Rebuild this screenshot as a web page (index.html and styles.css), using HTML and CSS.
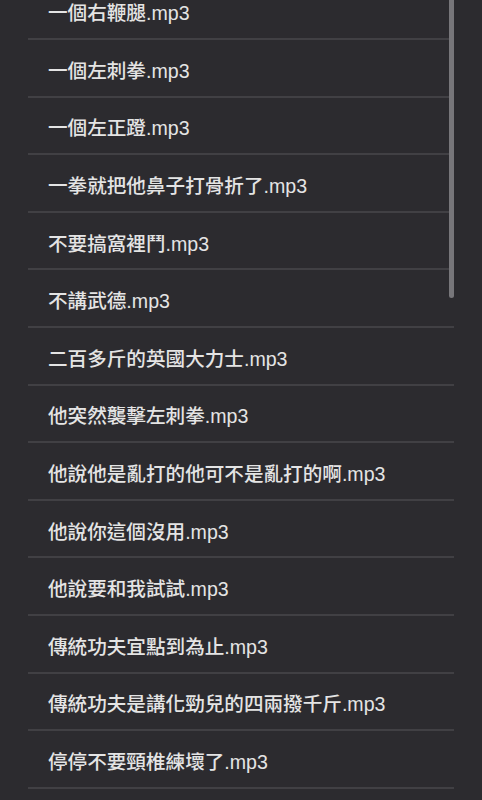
FILE: index.html
```html
<!DOCTYPE html>
<html lang="zh-Hant">
<head>
<meta charset="utf-8">
<link rel="stylesheet" href="styles.css">
</head>
<body>
<div class="viewport">
  <ul class="file-list">
    <li class="file-item">一個右鞭腿.mp3</li>
    <li class="file-item">一個左刺拳.mp3</li>
    <li class="file-item">一個左正蹬.mp3</li>
    <li class="file-item">一拳就把他鼻子打骨折了.mp3</li>
    <li class="file-item">不要搞窩裡鬥.mp3</li>
    <li class="file-item">不講武德.mp3</li>
    <li class="file-item">二百多斤的英國大力士.mp3</li>
    <li class="file-item">他突然襲擊左刺拳.mp3</li>
    <li class="file-item">他說他是亂打的他可不是亂打的啊.mp3</li>
    <li class="file-item">他說你這個沒用.mp3</li>
    <li class="file-item">他說要和我試試.mp3</li>
    <li class="file-item">傳統功夫宜點到為止.mp3</li>
    <li class="file-item">傳統功夫是講化勁兒的四兩撥千斤.mp3</li>
    <li class="file-item">停停不要頸椎練壞了.mp3</li>
  </ul>
  <div class="scrollbar"></div>
</div>
</body>
</html>
```

FILE: styles.css
```css
html, body {
  margin: 0;
  padding: 0;
  background: #2c2b2f;
}
body {
  width: 482px;
  height: 800px;
  overflow: hidden;
  font-family: "Liberation Sans", "Noto Sans CJK TC", sans-serif;
}
.viewport {
  position: relative;
  height: 800px;
  overflow: hidden;
}
.file-list {
  list-style: none;
  margin: -17.6px 28px 0 28px;
  padding: 0;
}
.file-item {
  box-sizing: border-box;
  height: 57.6px;
  display: flex;
  align-items: center;
  padding: 3px 0 0 20px;
  border-bottom: 2px solid #414044;
  color: #e4e4e4;
  font-size: 19.6px;
  font-weight: 500;
  white-space: nowrap;
}
.scrollbar {
  position: absolute;
  top: 0;
  left: 449px;
  width: 5px;
  height: 298px;
  background: #77767a;
  border-radius: 0 0 3px 3px;
}
```
